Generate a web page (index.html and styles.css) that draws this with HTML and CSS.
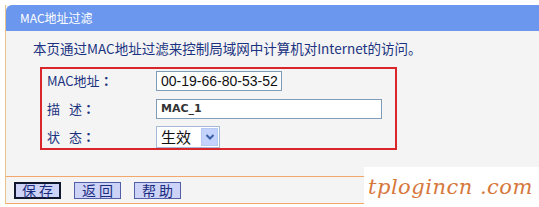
FILE: index.html
```html
<!DOCTYPE html>
<html>
<head>
<meta charset="utf-8">
<link rel="stylesheet" href="styles.css">
</head>
<body>
<div class="panel">
  <div class="header">MAC地址过滤</div>
  <div class="content">
    <p class="desc">本页通过MAC地址过滤来控制局域网中计算机对Internet的访问。</p>
    <div class="box">
      <div class="row">
        <span class="label">MAC地址<span class="colon">：</span></span>
        <span class="input mac">00-19-66-80-53-52</span>
      </div>
      <div class="row">
        <span class="label spaced">描 述<span class="colon">：</span></span>
        <span class="input descin">MAC_1</span>
      </div>
      <div class="row">
        <span class="label spaced">状 态<span class="colon">：</span></span>
        <span class="select"><span class="seltext">生效</span><span class="selbtn"><svg width="10" height="8" viewBox="0 0 10 8"><path d="M1.5 2 L5 5.5 L8.5 2" fill="none" stroke="#3a5fa8" stroke-width="2"/></svg></span></span>
      </div>
    </div>
  </div>
  <div class="footer">
    <span class="btn default">保 存</span>
    <span class="btn">返 回</span>
    <span class="btn">帮 助</span>
  </div>
</div>
<div class="watermark">tplogincn .com</div>
</body>
</html>
```
FILE: styles.css
```css
html, body {
  margin: 0;
  padding: 0;
  background: #ffffff;
  width: 539px;
  height: 207px;
  overflow: hidden;
  font-family: "Noto Sans CJK SC", "Liberation Sans", sans-serif;
}
.panel {
  margin: 5px 0 0 5px;
  border-left: 1px solid #e6c48c;
  background: #f4f4f4;
  width: 533px;
}
.header {
  height: 26px;
  line-height: 26px;
  background: #6b97ee;
  border-top-left-radius: 6px;
  color: #ffffff;
  font-size: 12px;
  padding-left: 14px;
}
.content {
  padding: 7px 0 0 0;
  height: 138px;
}
.desc {
  margin: 0 0 0 27px;
  font-size: 13.5px;
  line-height: 20px;
  color: #1b3380;
}
.box {
  margin: 9px 0 0 34px;
  width: 353px;
  height: 78px;
  border: 2px solid #d8262a;
  display: flex;
  flex-direction: column;
  padding-top: 1px;
  gap: 7px;
}
.row {
  display: flex;
  align-items: center;
  height: 21px;
}
.label {
  width: 114px;
  padding-left: 5px;
  font-size: 13px;
  color: #1b3380;
  box-sizing: border-box;
}
.colon {
  font-family: "Noto Sans CJK TC", sans-serif;
  font-weight: bold;
}
.spaced { word-spacing: 6px; }
.input {
  display: block;
  box-sizing: border-box;
  height: 20px;
  border: 1px solid #7f9db9;
  background: #ffffff;
  color: #111;
  padding-left: 4px;
  line-height: 18px;
}
.mac {
  width: 126px;
  font-family: "Liberation Sans", sans-serif;
  font-size: 14px;
}
.descin {
  width: 226px;
  font-family: "DejaVu Sans", sans-serif;
  font-size: 11px;
  font-weight: bold;
  color: #333;
}
.select {
  display: flex;
  align-items: center;
  box-sizing: border-box;
  width: 64px;
  height: 22px;
  border: 1px solid #a5b9d6;
  background: #ffffff;
}
.seltext {
  flex: 1;
  font-size: 15px;
  color: #111;
  padding-left: 4px;
}
.selbtn {
  width: 17px;
  height: 18px;
  margin-right: 1px;
  background: #c3d3fd;
  border: 1px solid #b6c9f0;
  box-sizing: border-box;
  display: flex;
  align-items: center;
  justify-content: center;
}
.footer {
  border-top: 1px solid #f3a76a;
  border-bottom: 1px solid #f3a76a;
  height: 26px;
  display: flex;
  align-items: center;
  gap: 13px;
  padding-left: 8px;
}
.btn {
  box-sizing: border-box;
  width: 47px;
  height: 17px;
  border: 1px solid #5160a8;
  background: #ccd3f7;
  color: #1b2b80;
  font-size: 14px;
  line-height: 15px;
  text-align: center;
}
.default {
  border: 2px solid #101830;
  line-height: 13px;
}
.watermark {
  position: absolute;
  left: 364px;
  top: 167px;
  width: 175px;
  height: 40px;
  background: #ffffff;
  color: #d6773c;
  font-family: "DejaVu Serif", serif;
  font-style: italic;
  font-size: 21px;
  line-height: 40px;
  padding-left: 4px;
  box-sizing: border-box;
  letter-spacing: 0.5px;
}
```
